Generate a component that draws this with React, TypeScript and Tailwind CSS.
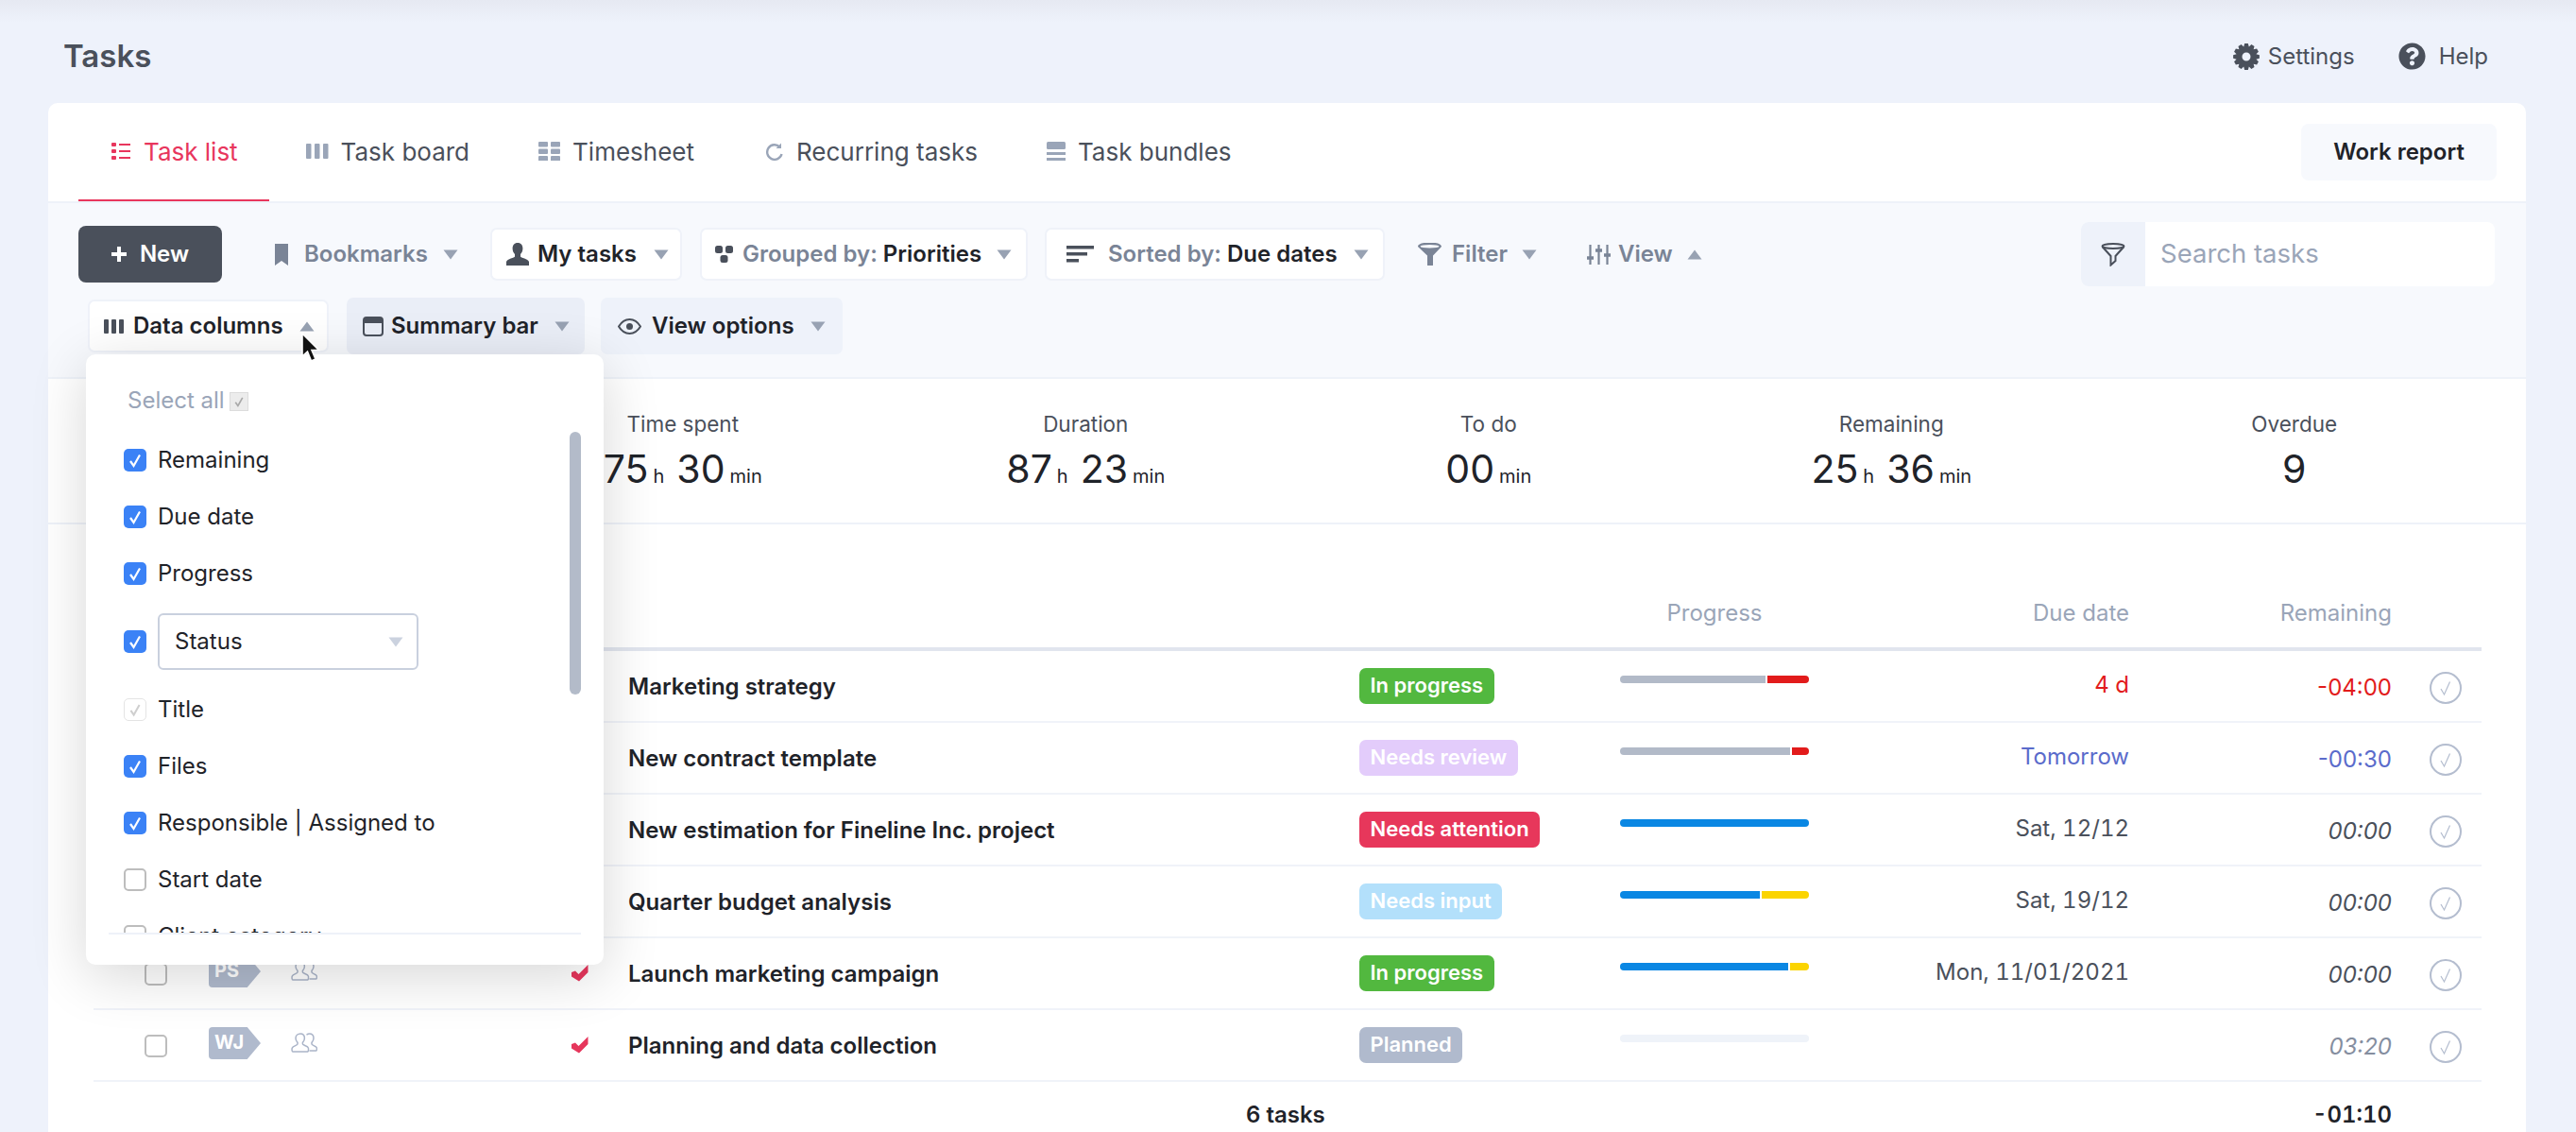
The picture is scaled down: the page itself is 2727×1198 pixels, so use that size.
import type { ReactNode } from "react";
import { FaQuestionCircle } from "react-icons/fa";

const gearPoints = () => {
  const pts: string[] = [];
  for (let i = 0; i < 12; i++) {
    const a = (i / 12) * Math.PI * 2;
    const step = Math.PI / 12;
    [[-1.1, 10.8], [-0.55, 14], [0.55, 14], [1.1, 10.8]].forEach(([o, r]) => {
      const t = a + (o * step) / 1.1;
      pts.push(`${(14 + r * Math.cos(t)).toFixed(2)} ${(14 + r * Math.sin(t)).toFixed(2)}`);
    });
  }
  return "M" + pts.join("L") + "Z";
};

function Caret({ up = false, className = "" }: { up?: boolean; className?: string }) {
  return (
    <svg width="16" height="11" viewBox="0 0 16 11" className={`shrink-0 ${className}`}>
      <path d={up ? "M8 .5 15.5 10.5H.5Z" : "M.5 .5H15.5L8 10.5Z"} fill="currentColor" />
    </svg>
  );
}

function Check({ className = "" }: { className?: string }) {
  return (
    <svg viewBox="0 0 24 24" className={className} fill="none" stroke="currentColor" strokeWidth="2.2">
      <path d="M7 13 10.5 18 17 6.5" />
    </svg>
  );
}

function Box({ state }: { state: "on" | "off" | "disabled" }) {
  if (state === "on")
    return (
      <span className="w-[24px] h-[24px] shrink-0 rounded-[5px] bg-[#3b82f6] text-white">
        <Check className="w-[24px] h-[24px]" />
      </span>
    );
  if (state === "disabled")
    return (
      <span className="w-[24px] h-[24px] shrink-0 rounded-[5px] border border-[#e4e4e4] text-[#cfcfcf]">
        <Check className="w-[22px] h-[22px]" />
      </span>
    );
  return <span className="w-[24px] h-[24px] shrink-0 rounded-[5px] border-2 border-[#bdbdbd] bg-white" />;
}

const tabs: { label: string; active?: boolean; spacing: string; icon: ReactNode }[] = [
  {
    label: "Task list",
    active: true,
    spacing: "gap-[14px] pl-[35px] pr-[33px]",
    icon: (
      <svg width="20" height="20" viewBox="0 0 20 20" fill="currentColor">
        <rect x="0" y="1" width="5" height="4" rx="1" />
        <rect x="0" y="8" width="5" height="4" rx="1" />
        <rect x="0" y="15" width="5" height="4" rx="1" />
        <rect x="8" y="2" width="12" height="2" />
        <rect x="8" y="9" width="12" height="2" />
        <rect x="8" y="16" width="12" height="2" />
      </svg>
    ),
  },
  {
    label: "Task board",
    spacing: "gap-[13px] pl-[36px] pr-[35px]",
    icon: (
      <svg width="24" height="20" viewBox="0 0 24 20" fill="currentColor">
        <rect x="0" y="2" width="5.5" height="16" rx="1" />
        <rect x="9" y="2" width="5.5" height="16" rx="1" />
        <rect x="18" y="2" width="5.5" height="16" rx="1" />
      </svg>
    ),
  },
  {
    label: "Timesheet",
    spacing: "gap-[12px] pl-[35px] pr-[37px]",
    icon: (
      <svg width="24" height="20" viewBox="0 0 24 20" fill="currentColor">
        <rect x="0" y="0" width="10" height="5.5" rx="1" />
        <rect x="13" y="0" width="10" height="5.5" rx="1" />
        <rect x="0" y="7.5" width="10" height="5.5" rx="1" />
        <rect x="13" y="7.5" width="10" height="5.5" rx="1" />
        <rect x="0" y="15" width="10" height="5.5" rx="1" />
        <rect x="13" y="15" width="10" height="5.5" rx="1" />
      </svg>
    ),
  },
  {
    label: "Recurring tasks",
    spacing: "gap-[13px] px-[35px]",
    icon: (
      <svg width="20" height="20" viewBox="0 0 20 20" fill="none" stroke="currentColor" strokeWidth="2.4">
        <path d="M15.5 5.5A7.8 7.8 0 1 0 17.5 13" />
        <path d="M17 1.5V7h-5.5Z" strokeWidth="0" fill="currentColor" />
      </svg>
    ),
  },
  {
    label: "Task bundles",
    spacing: "gap-[13px] px-[35px]",
    icon: (
      <svg width="20" height="20" viewBox="0 0 20 20" fill="currentColor">
        <rect x="0" y="0" width="20" height="8" rx="1.5" />
        <rect x="0" y="11" width="20" height="3" />
        <rect x="0" y="17" width="20" height="3" />
      </svg>
    ),
  },
];

function Bookmark() {
  return (
    <svg width="16" height="24" viewBox="0 0 16 24" fill="currentColor">
      <path d="M1 1h14v23l-7-5-7 5Z" />
    </svg>
  );
}

function Person() {
  return (
    <svg width="24" height="24" viewBox="0 0 24 24" fill="currentColor">
      <path d="M12 0c3.6 0 5.4 2.6 5.4 6 0 2.6-1 4.6-2.4 6v2.4c0 1.2 8.2 2.2 9 5.6V24H0v-4c.8-3.4 9-4.4 9-5.6V12C7.6 10.6 6.6 8.6 6.6 6 6.6 2.6 8.4 0 12 0Z" />
    </svg>
  );
}

function Nodes() {
  return (
    <svg width="19" height="20" viewBox="0 0 19 20" fill="currentColor">
      <rect x="0" y="1" width="8" height="8" rx="2.5" />
      <rect x="11" y="1" width="8" height="8" rx="2.5" />
      <rect x="5.5" y="11" width="8" height="8" rx="2.5" />
    </svg>
  );
}

function SortLines() {
  return (
    <svg width="29" height="18" viewBox="0 0 29 18" fill="currentColor">
      <rect x="0" y="0" width="29" height="3.5" />
      <rect x="0" y="7" width="22" height="3.5" />
      <rect x="0" y="14" width="13" height="3.5" />
    </svg>
  );
}

function Funnel({ outline = false }: { outline?: boolean }) {
  if (outline)
    return (
      <svg width="26" height="25" viewBox="0 0 26 25" fill="none" stroke="currentColor" strokeWidth="2">
        <ellipse cx="13" cy="3.5" rx="11.5" ry="2.5" />
        <path d="M1.5 4 10.5 14V23.5L15.5 19V14L24.5 4" />
      </svg>
    );
  return (
    <svg width="27" height="24" viewBox="0 0 27 24" fill="currentColor">
      <path d="M1 4c0-6 25-6 25 0L17 13.5V23a3 3 0 0 1-6 0V13.5Z" />
      <ellipse cx="13.5" cy="3.8" rx="10" ry="1.7" fill="#f7f9fd" />
    </svg>
  );
}

function Sliders() {
  return (
    <svg width="25" height="21" viewBox="0 0 25 21" fill="none" stroke="currentColor" strokeWidth="2.2">
      <path d="M3.5 0v21M12.5 0v21M21.5 0v21" />
      <path d="M0 14h7M9 6h7M18 11h7" strokeWidth="3.5" />
    </svg>
  );
}

function Columns() {
  return (
    <svg width="22" height="17" viewBox="0 0 22 17" fill="currentColor">
      <rect x="0" y="1" width="5" height="15" rx="1" />
      <rect x="8" y="1" width="5" height="15" rx="1" />
      <rect x="16" y="1" width="5" height="15" rx="1" />
    </svg>
  );
}

function Panel() {
  return (
    <svg width="22" height="21" viewBox="0 0 22 21">
      <rect x="1" y="1" width="20" height="19" rx="3" fill="none" stroke="currentColor" strokeWidth="2" />
      <path d="M1 4a3 3 0 0 1 3-3h14a3 3 0 0 1 3 3v3H1Z" fill="currentColor" />
    </svg>
  );
}

function Eye() {
  return (
    <svg width="25" height="17" viewBox="0 0 25 17" fill="none" stroke="currentColor" strokeWidth="2">
      <path d="M1 8.5C4 3.5 8 1 12.5 1S21 3.5 24 8.5C21 13.5 17 16 12.5 16S4 13.5 1 8.5Z" />
      <circle cx="12.5" cy="8.5" r="3.5" fill="currentColor" stroke="none" />
    </svg>
  );
}

function Chip({ className, children }: { className: string; children: ReactNode }) {
  return (
    <div className={`flex items-center rounded-[7px] text-[24px] font-semibold text-[#1f2329] ${className}`}>
      {children}
    </div>
  );
}

const stats = [
  { label: "Time spent", parts: [["75", "h"], ["30", "min"]] },
  { label: "Duration", parts: [["87", "h"], ["23", "min"]] },
  { label: "To do", parts: [["00", "min"]] },
  { label: "Remaining", parts: [["25", "h"], ["36", "min"]] },
  { label: "Overdue", parts: [["9", ""]] },
];

type Row = {
  title: string;
  status: string;
  statusClass: string;
  bar: [string, number, string?];
  due: string;
  dueClass: string;
  left: string;
  leftClass: string;
  tag?: string;
};

const rows: Row[] = [
  { title: "Marketing strategy", status: "In progress", statusClass: "bg-[#52b83f]", bar: ["bg-[#b2bac8]", 154, "bg-[#e21b1b]"], due: "4 d", dueClass: "text-[#e21b1b]", left: "-04:00", leftClass: "text-[#e21b1b]" },
  { title: "New contract template", status: "Needs review", statusClass: "bg-[#e3ccfb]", bar: ["bg-[#b2bac8]", 180, "bg-[#e21b1b]"], due: "Tomorrow", dueClass: "text-[#5a6bcb]", left: "-00:30", leftClass: "text-[#5a6bcb]" },
  { title: "New estimation for Fineline Inc. project", status: "Needs attention", statusClass: "bg-[#e7375b]", bar: ["bg-[#0a87e3]", 200], due: "Sat, 12/12", dueClass: "text-[#4a505b]", left: "00:00", leftClass: "italic text-[#4a505b]" },
  { title: "Quarter budget analysis", status: "Needs input", statusClass: "bg-[#b3e0fb]", bar: ["bg-[#0a87e3]", 148, "bg-[#fbd400]"], due: "Sat, 19/12", dueClass: "text-[#4a505b]", left: "00:00", leftClass: "italic text-[#4a505b]" },
  { title: "Launch marketing campaign", status: "In progress", statusClass: "bg-[#52b83f]", bar: ["bg-[#0a87e3]", 178, "bg-[#fbd400]"], due: "Mon, 11/01/2021", dueClass: "text-[#4a505b]", left: "00:00", leftClass: "italic text-[#4a505b]", tag: "PS" },
  { title: "Planning and data collection", status: "Planned", statusClass: "bg-[#b0bacd]", bar: ["bg-[#eff3f9]", 200], due: "", dueClass: "", left: "03:20", leftClass: "italic text-[#858e9f]", tag: "WJ" },
];

const gridCols = "grid grid-cols-[54px_68px_87px_297px_60px_774px_276px_200px_339px_278px_95px]";

function TaskRow({ row }: { row: Row }) {
  return (
    <div className={`${gridCols} h-[76px] border-b-2 border-[#f0f3f9] items-start`}>
      <div />
      {row.tag ? (
        <>
          <div className="mt-[26px] w-[24px] h-[24px] rounded-[5px] border-2 border-[#bdbdbd]" />
          <div className="mt-[18px] w-[55px] h-[34px] rounded-[4px] bg-[#b0bacd] text-white text-[20px] font-bold leading-[32px] pl-[6px] [clip-path:polygon(0_0,74%_0,100%_50%,74%_100%,0_100%)]">
            {row.tag}
          </div>
          <svg width="28" height="22" viewBox="0 0 28 22" fill="none" stroke="#aab4c8" strokeWidth="1.5" className="mt-[24px]">
            <path d="M10 1c2.8 0 4.4 2 4.4 4.8 0 2-1 3.6-2 4.6v1.6c0 1 5 2 5.8 3.6.6 1.1.4 4-.5 4.4H2c-1 0-1.3-3-.6-4.2.9-1.6 5.6-2.8 5.6-3.8v-1.6c-1-1-2-2.6-2-4.6C5 3 7.2 1 10 1Z" />
            <path d="M16.5 2.2C17.4 1.4 18.4 1 19.6 1c2.8 0 4.4 2 4.4 4.8 0 2-1 3.6-2 4.6V12c0 1 4 2 5 3.4.7 1 .4 3.6-.5 3.6h-7" />
          </svg>
          <svg width="18" height="18" viewBox="0 0 18 18" fill="#e6365c" className="mt-[28px]">
            <path d="M0 8 4 6.5 7.5 10 17.5 0V8L8 17.5 0 12.5Z" />
          </svg>
        </>
      ) : (
        <div className="col-span-4" />
      )}
      <div className="mt-[20px] text-[24px] leading-[36px] font-semibold text-[#1f2329] whitespace-nowrap">{row.title}</div>
      <div className="mt-[18px]">
        <span className={`inline-block h-[38px] px-[11.5px] rounded-[7px] text-white text-[22px] font-semibold leading-[36px] whitespace-nowrap ${row.statusClass}`}>
          {row.status}
        </span>
      </div>
      <div className="mt-[26px] flex w-[200px] h-[8px] rounded-full overflow-hidden gap-[2px]">
        <div className={`h-full ${row.bar[0]}`} style={{ width: row.bar[1] }} />
        {row.bar[2] && <div className={`h-full flex-1 ${row.bar[2]}`} />}
      </div>
      <div className={`mt-[18px] text-right text-[24px] leading-[36px] whitespace-nowrap tabular-nums ${row.dueClass}`}>{row.due}</div>
      <div className={`mt-[21px] text-right text-[24px] leading-[36px] ${row.leftClass}`}>{row.left}</div>
      <svg width="34" height="34" viewBox="0 0 34 34" fill="none" stroke="#b4bdcf" className="mt-[22px] ml-[40px]">
        <circle cx="17" cy="17" r="16" strokeWidth="2" />
        <path d="M12 18 15.5 24 21.5 10.5" strokeWidth="1.2" />
      </svg>
    </div>
  );
}

const columnItems: { label: string; state: "on" | "off" | "disabled"; select?: boolean }[] = [
  { label: "Remaining", state: "on" },
  { label: "Due date", state: "on" },
  { label: "Progress", state: "on" },
  { label: "Status", state: "on", select: true },
  { label: "Title", state: "disabled" },
  { label: "Files", state: "on" },
  { label: "Responsible | Assigned to", state: "on" },
  { label: "Start date", state: "off" },
  { label: "Client category", state: "off" },
];

function ColumnsMenu() {
  return (
    <div className="absolute left-[91px] top-[375px] z-10 w-[548px] h-[646px] rounded-[10px] bg-white shadow-[0_12px_60px_rgba(0,0,0,0.16)] flex flex-col">
      <div className="h-[82px] pl-[44px] pt-[31px] flex items-start gap-[5px]">
        <span className="text-[24px] leading-[36px] text-[#9aa5b8]">Select all</span>
        <span className="mt-[9px] w-[20px] h-[20px] bg-[#ececec] border border-[#dcdcdc] text-[#a9a9a9]">
          <Check className="w-[18px] h-[18px]" />
        </span>
      </div>
      <div className="relative h-[530px] overflow-hidden pl-[40px]">
        {columnItems.map((item) => (
          <div key={item.label} className={`flex items-center gap-[12px] text-[24px] text-[#1f2329] ${item.select ? "h-[84px]" : "h-[60px]"}`}>
            <Box state={item.state} />
            {item.select ? (
              <div className="w-[276px] h-[60px] rounded-[6px] border-2 border-[#c9d0de] flex items-center justify-between pl-[16px] pr-[14px]">
                {item.label}
                <Caret className="text-[#cbd2df]" />
              </div>
            ) : (
              item.label
            )}
          </div>
        ))}
        <div className="absolute left-[512px] top-0 w-[12px] h-[278px] rounded-full bg-[#b3bbc9]" />
      </div>
      <div className="mx-[24px] h-[2px] bg-[#eef2f9]" />
    </div>
  );
}

export default function App() {
  return (
    <div className="relative h-[1198px] overflow-hidden bg-[linear-gradient(#e6e9f2,#eef2fb_24px)] [font-family:Inter,sans-serif]">
      <header className="h-[109px] pl-[67px] pr-[93px] pt-[10px] flex items-center justify-between text-[#4a505b]">
        <h1 className="text-[33px] font-semibold">Tasks</h1>
        <div className="flex items-center text-[24px]">
          <svg width="28" height="28" viewBox="0 0 28 28" fill="currentColor">
            <path fillRule="evenodd" d={`${gearPoints()}M14 9.5a4.5 4.5 0 1 0 0 9 4.5 4.5 0 1 0 0-9Z`} />
          </svg>
          <span className="ml-[9px]">Settings</span>
          <FaQuestionCircle size={29} className="ml-[46px]" />
          <span className="ml-[14px]">Help</span>
        </div>
      </header>

      <main className="ml-[51px] w-[2623px] rounded-t-[10px] bg-white">
        <div className="h-[106px] border-b-2 border-[#eef2f9] pl-[32px] pr-[31px] flex items-start justify-between">
          <nav className="flex h-[104px] gap-[3px]">
            {tabs.map((t) => (
              <a
                key={t.label}
                className={`flex items-center text-[26px] border-b-[2px] ${t.spacing} ${
                  t.active ? "text-[#e8365d] border-[#e8365d]" : "text-[#4a505b] border-transparent"
                }`}
              >
                <span className={t.active ? "" : "text-[#9aa5b8]"}>{t.icon}</span>
                {t.label}
              </a>
            ))}
          </nav>
          <button className="mt-[22px] w-[207px] h-[60px] rounded-[8px] bg-[#f7f9fd] text-[24px] font-semibold text-[#1f2329]">
            Work report
          </button>
        </div>

        <div className="h-[186px] border-b-2 border-[#eef2f9] bg-[#f7f9fd] pl-[32px] pr-[33px] pt-[20px]">
          <div className="flex items-center h-[68px]">
            <button className="w-[152px] h-[60px] rounded-[8px] bg-[#4a505b] text-white text-[24px] font-semibold flex items-center justify-center gap-[14px]">
              <svg width="16" height="16" viewBox="0 0 16 16" fill="currentColor">
                <path d="M6 0h4v6h6v4h-6v6H6v-6H0V6h6Z" />
              </svg>
              New
            </button>
            <Chip className="ml-[55px] w-[229px] text-[#7a8496]">
              <Bookmark />
              <span className="ml-[16px] mr-[16px] text-[#7a8496]">Bookmarks</span>
              <Caret className="text-[#98a2b3]" />
            </Chip>
            <Chip className="w-[203px] h-[56px] bg-white border-2 border-[#eff2f9] pl-[15px] gap-[9px]">
              <span className="text-[#4a505b]"><Person /></span>
              My tasks
              <Caret className="ml-[9px] text-[#98a2b3]" />
            </Chip>
            <Chip className="ml-[19px] w-[347px] h-[56px] bg-white border-2 border-[#eff2f9] pl-[14px] gap-[10px]">
              <span className="text-[#4a505b]"><Nodes /></span>
              <span>
                <span className="text-[#7a8496]">Grouped by: </span>Priorities
              </span>
              <Caret className="ml-[6px] text-[#98a2b3]" />
            </Chip>
            <Chip className="ml-[18px] w-[360px] h-[56px] bg-white border-2 border-[#eff2f9] pl-[21px] gap-[15px]">
              <span className="text-[#4a505b]"><SortLines /></span>
              <span>
                <span className="text-[#7a8496]">Sorted by: </span>Due dates
              </span>
              <Caret className="ml-[2px] text-[#98a2b3]" />
            </Chip>
            <Chip className="ml-[34px] text-[#7a8496]">
              <Funnel />
              <span className="ml-[10px] text-[#7a8496]">Filter</span>
              <Caret className="ml-[15px] text-[#98a2b3]" />
            </Chip>
            <Chip className="ml-[53px] text-[#7a8496]">
              <Sliders />
              <span className="ml-[8px] text-[#7a8496]">View</span>
              <Caret up className="ml-[15px] text-[#98a2b3]" />
            </Chip>
            <div className="ml-auto w-[438px] h-[68px] rounded-[8px] overflow-hidden bg-white flex items-center">
              <div className="w-[68px] h-full bg-[#eef2fa] flex items-center justify-center text-[#4a505b]">
                <Funnel outline />
              </div>
              <span className="ml-[16px] text-[27.5px] text-[#9aa5b8]">Search tasks</span>
            </div>
          </div>
          <div className="mt-[12px] pl-[10px] flex items-start">
            <Chip className="w-[255px] h-[56px] mt-[2px] bg-white border-2 border-[#eff2f9] pl-[15px] gap-[9px]">
              <span className="text-[#4a505b]"><Columns /></span>
              Data columns
              <Caret up className="ml-[8px] text-[#98a2b3]" />
            </Chip>
            <Chip className="ml-[19px] w-[252px] h-[60px] bg-[#eaeef7] pl-[17px] gap-[8px]">
              <span className="text-[#4a505b]"><Panel /></span>
              Summary bar
              <Caret className="ml-[9px] text-[#98a2b3]" />
            </Chip>
            <Chip className="ml-[17px] w-[256px] h-[60px] bg-[#eef2fa] pl-[18px] gap-[11px]">
              <span className="text-[#4a505b]"><Eye /></span>
              View options
              <Caret className="ml-[6px] text-[#98a2b3]" />
            </Chip>
          </div>
        </div>

        <div className="h-[154px] border-b-2 border-[#eef2f9] pl-[32px] pr-[32px] pt-[30px] grid grid-cols-6">
          <div />
          {stats.map((s) => (
            <div key={s.label} className="flex flex-col items-center text-[#1f2329]">
              <span className="text-[22.5px] leading-[36px] text-[#4a505b]">{s.label}</span>
              <div className="mt-[5px] flex items-baseline leading-[48px]">
                {s.parts.map(([n, u], i) => (
                  <span key={i} className={i > 0 ? "ml-[13px]" : ""}>
                    <span className="text-[41px]">{n}</span>
                    {u && <span className="ml-[5px] text-[20px]">{u}</span>}
                  </span>
                ))}
              </div>
            </div>
          ))}
        </div>

        <div className="ml-[48px] w-[2528px]">
          <div className={`${gridCols} h-[134px] border-b-4 border-[#e1e5ee] items-start text-[24px] text-[#9aa5b8]`}>
            <div className="col-span-7" />
            <div className="mt-[76px] text-center leading-[36px]">Progress</div>
            <div className="mt-[76px] text-right leading-[36px]">Due date</div>
            <div className="mt-[76px] text-right leading-[36px]">Remaining</div>
          </div>
          {rows.map((r) => (
            <TaskRow key={r.title} row={r} />
          ))}
          <div className={`${gridCols} h-[53px] items-start text-[24px] leading-[36px] font-semibold text-[#1f2329]`}>
            <div className="col-span-5" />
            <div className="mt-[17px] whitespace-nowrap pl-[654px]">6 tasks</div>
            <div className="col-start-10 mt-[17px] text-right tabular-nums">-01:10</div>
          </div>
        </div>
      </main>

      <ColumnsMenu />

      <svg width="22" height="34" viewBox="0 0 22 34" className="absolute left-[318px] top-[352px] z-20">
        <path d="M2 1V25L7.5 20 11.5 30 16 28 12 18.5H19.5Z" fill="#111" stroke="#fff" strokeWidth="1.6" />
      </svg>
    </div>
  );
}
